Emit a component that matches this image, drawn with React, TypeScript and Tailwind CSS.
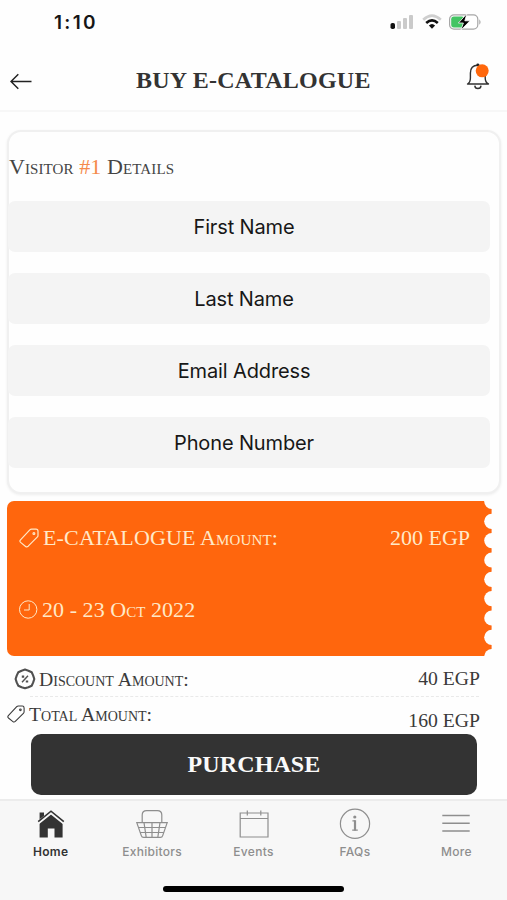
import type { ReactNode } from "react";

const serif = "font-['Liberation_Serif',serif]";
const sans = "font-['Inter',sans-serif]";

function StatusBar() {
  return (
    <div className="flex h-[44px] items-center justify-between pl-[54px] pr-[25px]">
      <span className="font-['Inter',sans-serif] text-[19px] font-semibold leading-none tracking-[2.3px] text-[#161616]">1:10</span>
      <div className="flex items-center">
        <svg width="24" height="16" viewBox="0 0 24 16">
          <rect x="0.5" y="9" width="4.5" height="6" rx="1.8" fill="#111" />
          <rect x="7" y="7" width="4" height="8" rx="1" fill="#cacaca" />
          <rect x="13" y="4" width="4" height="11" rx="1" fill="#cacaca" />
          <rect x="19" y="1" width="4" height="14" rx="1" fill="#cacaca" />
        </svg>
        <svg className="ml-[8px]" width="20" height="16" viewBox="0 0 20 16">
          <path d="M1.2 5.8 Q10 -2.4 18.8 5.8" fill="none" stroke="#cfcfcf" strokeWidth="2.6" />
          <path d="M4.2 9 Q10 3.6 15.8 9" fill="none" stroke="#111" strokeWidth="2.6" />
          <path d="M6.9 11.6 Q10 8.6 13.1 11.6 L10 14.8Z" fill="#111" />
        </svg>
        <svg className="ml-[6px]" width="34" height="16" viewBox="0 0 34 16">
          <rect x="1.6" y="0.9" width="28.2" height="14.2" rx="4.4" fill="#fff" stroke="#a6a6a6" strokeWidth="1.2" />
          <rect x="3.2" y="2.6" width="13" height="10.8" rx="2.6" fill="#43c463" />
          <path d="M31.4 5.2 Q33.6 8 31.4 10.8Z" fill="#999" />
          <path d="M18.9 -0.3 L10.4 9 h5 L12.8 16.3 L22 6.8 h-5.2Z" fill="#000" stroke="#fff" strokeWidth="0.8" />
        </svg>
      </div>
    </div>
  );
}

function Header() {
  return (
    <header className="h-[112px] border-b-2 border-[#f7f7f7]">
      <StatusBar />
      <div className="flex h-[66px] items-center pl-[10px] pr-[16px] pt-[7px]">
        <svg width="23" height="20" viewBox="0 0 23 20" fill="none" stroke="#222" strokeWidth="1.5">
          <path d="M1 10.5 H21.5 M8.3 3.2 L1 10.5 L8.3 17.8" />
        </svg>
        <h1 className={`${serif} mb-[2px] ml-[103px] text-[24px] font-bold leading-none tracking-[0.25px] whitespace-nowrap text-[#333]`}>BUY E-CATALOGUE</h1>
        <svg className="-mt-[10px] ml-auto" width="25" height="28" viewBox="0 0 25 28" fill="none">
          <path d="M1.5 22 Q4.4 20.5 4.4 16 V11 C4.4 6.2 7 3.2 11.8 3.2 C16.6 3.2 19.2 6.2 19.2 11 V16 Q19.2 20.5 22.5 22Z" stroke="#303030" strokeWidth="1.4" strokeLinejoin="round" />
          <path d="M8.8 23.6 C9 27.4 14.8 27.4 15 23.6" stroke="#303030" strokeWidth="1.4" />
          <circle cx="11.8" cy="2.8" r="1.4" fill="#222" />
          <circle cx="16.2" cy="8.8" r="6.5" fill="#ff670c" />
        </svg>
      </div>
    </header>
  );
}

function Field({ label }: { label: string }) {
  return (
    <div className={`${sans} flex h-[51px] items-center justify-center rounded-[7px] bg-[#f4f4f4] pr-[10px] text-[20px] leading-none tracking-[-0.13px] text-[#171717]`}>
      {label}
    </div>
  );
}

function TagIcon() {
  return (
    <svg width="20" height="20" viewBox="0 0 20 20" fill="none" stroke="currentColor" strokeWidth="1.2" strokeLinejoin="round">
      <path d="M12.6 1.2 H17 Q19 1.2 19 3.2 V7.4 Q19 8.4 18.2 9.2 L9.2 18.2 Q7.9 19.4 6.6 18.4 L1.6 14.4 Q0.3 13.2 1.5 11.9 L10.8 1.9 Q11.5 1.2 12.6 1.2Z" />
      <circle cx="14.9" cy="5.4" r="0.9" />
    </svg>
  );
}

function TicketEdge() {
  const notches = [0.4, 20.3, 39.6, 59, 78.3, 97.6, 117, 136.3, 155.6];
  return (
    <svg width="8" height="155" viewBox="0 0 8 155">
      <rect width="7.6" height="155" fill="#ff660d" />
      {notches.map((y) => (
        <circle key={y} cx="7.8" cy={y} r="7.6" fill="#fefefe" />
      ))}
    </svg>
  );
}

function Ticket() {
  return (
    <section className={`${serif} mx-[7px] mt-[7px] flex h-[155px] text-[#ffe9c8]`}>
      <div className="w-[477px] rounded-l-[7px] bg-[#ff660d] pl-[12px] pr-[14px] pt-[22px]">
        <div className="flex h-[30px] items-center justify-between">
          <div className="flex items-center gap-[4px]">
            <TagIcon />
            <span className="text-[22px] leading-none tracking-[0.15px] whitespace-nowrap [font-variant-caps:small-caps]">E-CATALOGUE Amount:</span>
          </div>
          <span className="text-[22px] leading-none whitespace-nowrap">200 EGP</span>
        </div>
        <div className="mt-[42px] flex h-[30px] items-center gap-[4px]">
          <svg width="19" height="20" viewBox="0 0 19 20" fill="none" stroke="currentColor" strokeWidth="1">
            <circle cx="9.2" cy="9.5" r="8.7" />
            <path d="M10.2 4 V10 H5" />
          </svg>
          <span className="text-[22px] leading-none tracking-[0.05px] whitespace-nowrap [font-variant-caps:small-caps]">20 - 23 Oct 2022</span>
        </div>
      </div>
      <TicketEdge />
    </section>
  );
}

function DiscountIcon() {
  return (
    <svg width="22" height="22" viewBox="0 0 22 22" fill="none" stroke="#505050">
      <path d="M11 1.6 L14.4 2.7 L17.7 4.3 L19.2 7.6 L20.3 11 L19.2 14.4 L17.7 17.7 L14.4 19.2 L11 20.3 L7.6 19.2 L4.3 17.7 L2.7 14.4 L1.6 11 L2.7 7.6 L4.3 4.3 L7.6 2.7Z" strokeWidth="2.1" strokeLinejoin="round" />
      <path d="M14 7.8 L8 14.2" strokeWidth="1.4" />
      <path d="M7.8 8.6 H10.2 M11.8 13.5 H14.2" strokeWidth="2.1" />
    </svg>
  );
}

function Totals() {
  return (
    <section className={`${serif} text-[19.7px] leading-none text-[#3a3a3a]`}>
      <div className="flex h-[40px] items-center justify-between pl-[14px] pr-[27px] pt-[6px]">
        <div className="flex items-center gap-[3px]">
          <DiscountIcon />
          <span className="mt-[2px] whitespace-nowrap [font-variant-caps:small-caps]">Discount Amount:</span>
        </div>
        <span className="whitespace-nowrap">40 EGP</span>
      </div>
      <div className="ml-[30px] mr-[28px] border-t border-dashed border-[#e9e9e9]" />
      <div className="flex h-[37px] items-center justify-between pl-[7px] pr-[27px]">
        <div className="-mt-[2px] flex items-center gap-[4px]">
          <svg width="18" height="18" viewBox="0 0 20 20" fill="none" stroke="currentColor" strokeWidth="1.2" strokeLinejoin="round">
            <path d="M12.6 1.2 H17 Q19 1.2 19 3.2 V7.4 Q19 8.4 18.2 9.2 L9.2 18.2 Q7.9 19.4 6.6 18.4 L1.6 14.4 Q0.3 13.2 1.5 11.9 L10.8 1.9 Q11.5 1.2 12.6 1.2Z" />
            <circle cx="14.9" cy="5.4" r="0.9" />
          </svg>
          <span className="whitespace-nowrap [font-variant-caps:small-caps]">Total Amount:</span>
        </div>
        <span className="mt-[11px] whitespace-nowrap">160 EGP</span>
      </div>
    </section>
  );
}

function Tab({ label, active, children }: { label: string; active?: boolean; children: ReactNode }) {
  return (
    <div className={`flex flex-1 flex-col items-center gap-[5px] ${active ? "text-[#333]" : "text-[#8e8e8e]"}`}>
      <svg width="34" height="34" viewBox="0 0 34 34" fill="none" stroke="currentColor" strokeWidth="1.2">
        {children}
      </svg>
      <span className={`${sans} text-[12px] leading-[14px] tracking-[0.3px] ${active ? "font-semibold" : "font-medium"}`}>{label}</span>
    </div>
  );
}

function TabBar() {
  return (
    <nav className="mt-[4px] flex h-[101px] flex-col items-center border-t-2 border-[#ececec] bg-[#f7f7f7]">
      <div className="flex w-full pt-[5px]">
        <Tab label="Home" active>
          <path d="M5.6 6.4 H10 V12 L17 6.8 L28.6 16 V31.6 H20.5 V22.5 H13.8 V31.6 H5.6Z" fill="currentColor" stroke="none" />
          <path d="M4.2 16.6 L17 6.4 L29.8 16.6" stroke="#f7f7f7" strokeWidth="3.4" />
          <path d="M4.2 15.6 L17 5.2 L29.8 15.6" strokeWidth="1.6" />
        </Tab>
        <Tab label="Exhibitors">
          <path d="M7.2 17 V9 Q7.2 4.6 11.6 4.6 H22.4 Q26.8 4.6 26.8 9 V17" />
          <path d="M1.8 16.6 H32.2 L27.7 29.6 Q27.2 31.4 25.4 31.4 H8.6 Q6.8 31.4 6.3 29.6Z M3.4 21.5 H30.6 M5.1 26.5 H28.9 M9 16.6 L11.2 31.4 M17 16.6 V31.4 M25 16.6 L22.8 31.4" />
        </Tab>
        <Tab label="Events">
          <path d="M3.2 7 H31 V31 H3.2Z M3.2 12.5 H31 M10.3 4.5 V9.5 M23.8 4.5 V9.5" />
        </Tab>
        <Tab label="FAQs">
          <circle cx="17" cy="17.8" r="14.6" />
          <path d="M14.4 14.8 H17 M14.2 24.2 H19.8" strokeWidth="1.2" />
          <path d="M17 14.2 V24.6" strokeWidth="2.2" />
          <circle cx="16.8" cy="11" r="1.6" fill="currentColor" stroke="none" />
        </Tab>
        <Tab label="More">
          <path d="M3.3 9.5 H30.7 M3.3 17.3 H30.7 M3.3 25 H30.7" strokeWidth="1.4" />
        </Tab>
      </div>
      <div className="mt-[27px] h-[6px] w-[181px] rounded-full bg-black" />
    </nav>
  );
}

export default function App() {
  return (
    <div className="flex h-[900px] w-[507px] flex-col overflow-hidden bg-[#fefefe]">
      <Header />
      <section className="ml-[7px] mr-[6px] mt-[18px] h-[364px] rounded-[14px] border-2 border-[#f0f0f0] bg-[#fefefe] pr-[9px] shadow-[0_1px_3px_rgba(0,0,0,0.07)]">
        <h2 className={`${serif} flex h-[69px] items-center text-[22px] leading-none tracking-[0.1px] whitespace-nowrap text-[#444] [font-variant-caps:small-caps]`}>
          <span>Visitor <span className="text-[#f58a4b]">#1</span> Details</span>
        </h2>
        <div className="-ml-px flex flex-col gap-[21px]">
          <Field label="First Name" />
          <Field label="Last Name" />
          <Field label="Email Address" />
          <Field label="Phone Number" />
        </div>
      </section>
      <Ticket />
      <Totals />
      <button className={`${serif} ml-[31px] h-[61px] w-[446px] shrink-0 rounded-[10px] bg-[#333] pb-[2px] text-[24px] font-bold leading-none tracking-[0.1px] text-[#fafafa]`}>PURCHASE</button>
      <TabBar />
    </div>
  );
}
